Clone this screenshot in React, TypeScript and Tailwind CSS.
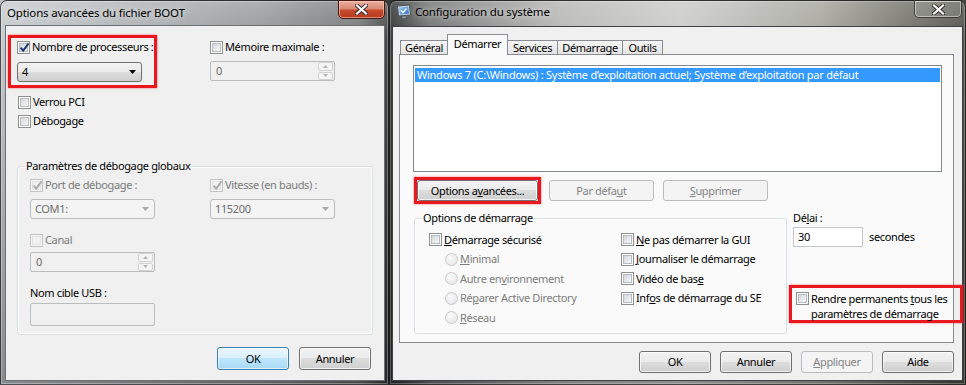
import type { ReactNode } from "react";

function Check({ checked = false, disabled = false }: { checked?: boolean; disabled?: boolean }) {
  return (
    <span
      className={`relative flex h-[13px] w-[13px] shrink-0 items-center justify-center border ${
        disabled ? "border-[#c4c4c4] bg-[#f7f7f7]" : "border-[#8e8f8f] bg-white"
      }`}
    >
      <span
        className={`h-[9px] w-[9px] border ${
          disabled
            ? "border-[#e2e2e2] bg-[#f2f2f2]"
            : "border-[#b8bcc2] bg-[linear-gradient(135deg,#d3d7dc,#f7f7f7)]"
        }`}
      />
      {checked && (
        <svg className="absolute left-[1px] top-0" width="11" height="11" viewBox="0 0 11 11">
          <path
            d="M1.6 5.6 L4.2 8.6 L9.6 1.4"
            fill="none"
            stroke={disabled ? "#ababab" : "#1f3574"}
            strokeWidth="2"
          />
        </svg>
      )}
    </span>
  );
}

function CheckRow({
  children,
  checked,
  disabled,
  className = "",
}: {
  children: ReactNode;
  checked?: boolean;
  disabled?: boolean;
  className?: string;
}) {
  return (
    <div className={`flex h-[16px] items-center gap-[2px] ${className}`}>
      <Check checked={checked} disabled={disabled} />
      <span className={disabled ? "text-[#7a7a7a]" : ""}>{children}</span>
    </div>
  );
}

function RadioRow({ children }: { children: ReactNode }) {
  return (
    <div className="flex h-[19.5px] items-center gap-[2px] pl-[16px]">
      <span className="h-[13px] w-[13px] shrink-0 rounded-full border border-[#c7c9cc] bg-[radial-gradient(circle_at_40%_35%,#fbfbfb,#e2e3e5)]" />
      <span className="text-[#7d7d7d]">{children}</span>
    </div>
  );
}

function Arrow({ color }: { color: string }) {
  return (
    <svg width="7" height="4" viewBox="0 0 7 4">
      <path d="M0 0H7L3.5 4Z" fill={color} />
    </svg>
  );
}

function Combo({ value, disabled = false }: { value: string; disabled?: boolean }) {
  return (
    <div
      className={`flex h-[20px] w-[125px] items-center justify-between rounded-[3px] border pl-[4px] pr-[5px] ${
        disabled
          ? "border-[#b9bdc0] bg-[#f4f4f4] text-[#6d6d6d]"
          : "border-[#707070] bg-[linear-gradient(#f2f2f2_0%,#ebebeb_50%,#dddddd_50%,#cfcfcf_100%)]"
      }`}
    >
      <span>{value}</span>
      <Arrow color={disabled ? "#a8a8a8" : "#000"} />
    </div>
  );
}

function Spin() {
  return (
    <div className="flex h-[20px] w-[125px] items-center justify-between rounded-[2px] border border-[#b9bdc0] bg-[#f0f0f0] pl-[5px] pr-px text-[#6d6d6d]">
      <span>0</span>
      <div className="flex h-[18px] w-[15px] flex-col gap-px">
        <div className="flex flex-1 items-center justify-center rounded-[2px] border border-[#d3d3d3] bg-[#f4f4f4]">
          <svg width="5" height="3" viewBox="0 0 5 3">
            <path d="M0 3H5L2.5 0Z" fill="#b3b3b3" />
          </svg>
        </div>
        <div className="flex flex-1 items-center justify-center rounded-[2px] border border-[#d3d3d3] bg-[#f4f4f4]">
          <svg width="5" height="3" viewBox="0 0 5 3">
            <path d="M0 0H5L2.5 3Z" fill="#b3b3b3" />
          </svg>
        </div>
      </div>
    </div>
  );
}

function Button({
  children,
  w = "w-[72px]",
  h = "h-[23px]",
  variant = "normal",
}: {
  children: ReactNode;
  w?: string;
  h?: string;
  variant?: "normal" | "default" | "disabled";
}) {
  const look =
    variant === "default"
      ? "border-[#3c7fb1] bg-[linear-gradient(#eaf6fd_0%,#d9f0fc_50%,#bee6fd_50%,#a7d9f5_100%)] shadow-[inset_0_0_0_1px_rgba(255,255,255,0.6)]"
      : variant === "disabled"
        ? "border-[#b9bdc0] bg-[#f4f4f4] text-[#838383]"
        : "border-[#707070] bg-[linear-gradient(#f2f2f2_0%,#ebebeb_50%,#dddddd_50%,#cfcfcf_100%)] shadow-[inset_0_0_0_1px_rgba(255,255,255,0.7)]";
  return (
    <div className={`flex shrink-0 items-center justify-center rounded-[3px] border ${w} ${h} ${look}`}>
      {children}
    </div>
  );
}

function CloseGlyph() {
  return (
    <svg width="13" height="11" viewBox="0 0 13 11">
      <path d="M2 1.5 L11 9.5 M11 1.5 L2 9.5" stroke="#3a2a28" strokeWidth="4" strokeLinecap="square" />
      <path d="M2 1.5 L11 9.5 M11 1.5 L2 9.5" stroke="#ffffff" strokeWidth="2.2" strokeLinecap="square" />
    </svg>
  );
}

function MonitorIcon() {
  return (
    <svg width="16" height="16" viewBox="0 0 16 16">
      <defs>
        <linearGradient id="scr" x1="0" y1="0" x2="1" y2="1">
          <stop offset="0" stopColor="#9fd0f5" />
          <stop offset="1" stopColor="#2f6fc0" />
        </linearGradient>
      </defs>
      <path d="M1.5 2 L13.5 1 L14.5 11 L2.5 12 Z" fill="#d6d9dd" stroke="#4a5058" />
      <path d="M3 3.3 L12.3 2.5 L13 9.8 L3.8 10.6 Z" fill="url(#scr)" />
      <path d="M5 6.5 L7 8.5 L10.5 4.5" fill="none" stroke="#ffffff" strokeWidth="1.2" />
      <path d="M6 12 L10 11.7 L11 14.5 L5.5 14.8 Z" fill="#8c939b" stroke="#4a5058" strokeWidth="0.8" />
    </svg>
  );
}

function BootWindow() {
  return (
    <div className="flex h-[385px] w-[389px] shrink-0 flex-col rounded-t-[7px] border border-[rgba(20,22,24,0.7)] bg-[linear-gradient(180deg,rgba(255,255,255,0.28),rgba(255,255,255,0.06)_40px,rgba(0,0,0,0.3))] pl-[4px] pr-[3px] shadow-[inset_0_0_0_1px_rgba(255,255,255,0.3)]">
      {/* Title bar */}
      <div className="flex h-[24px] items-start justify-between">
        <span className="mt-[4px] pl-[2px] text-[11.5px] tracking-[-0.2px] [text-shadow:0_0_6px_rgba(255,255,255,0.9)]">
          Options avancées du fichier BOOT
        </span>
        <div className="-mt-px flex h-[19px] w-[47px] items-center justify-center rounded-b-[5px] border border-[#4a1a12] bg-[linear-gradient(#eab0a2_0%,#d98a73_45%,#c54a2e_55%,#b8391c_100%)] shadow-[inset_0_0_0_1px_rgba(255,210,200,0.55)]">
          <CloseGlyph />
        </div>
      </div>

      {/* Client */}
      <div className="h-[356px] border border-[#6a7176] bg-[#f0f0f0]">
        <div className="flex items-start">
          <div className="ml-[2px] mt-[9px] w-[149px] border-[3px] border-[#e8181e] pb-[3px] pl-[6px] pt-px shadow-[0_0_2px_rgba(232,24,30,0.6)]">
            <CheckRow checked>Nombre de processeurs :</CheckRow>
            <div className="mt-[7px]">
              <Combo value="4" />
            </div>
          </div>
          <div className="ml-[53px] mt-[13px]">
            <CheckRow>Mémoire maximale :</CheckRow>
            <div className="mt-[6px]">
              <Spin />
            </div>
          </div>
        </div>

        <CheckRow className="ml-[12px] mt-[6px]">Verrou PCI</CheckRow>
        <CheckRow className="ml-[12px] mt-[3px]">Débogage</CheckRow>

        <fieldset className="ml-[11px] mt-[29px] h-[177px] w-[356px] rounded-[3px] border border-[#d5dfe5] shadow-[inset_0_0_0_1px_#ffffff]">
          <legend className="ml-[7px] px-px">Paramètres de débogage globaux</legend>
          <div className="pl-[12px] pt-[3px]">
            <div className="flex">
              <div className="w-[180px]">
                <CheckRow checked disabled>
                  Port de débogage :
                </CheckRow>
                <div className="mt-[6px]">
                  <Combo value="COM1:" disabled />
                </div>
              </div>
              <div>
                <CheckRow checked disabled>
                  Vitesse (en bauds) :
                </CheckRow>
                <div className="mt-[6px]">
                  <Combo value="115200" disabled />
                </div>
              </div>
            </div>
            <CheckRow disabled className="mt-[13px]">
              Canal
            </CheckRow>
            <div className="mt-[4px]">
              <Spin />
            </div>
            <div className="mt-[13px] h-[16px]">Nom cible USB :</div>
            <div className="mt-[2px] h-[23px] w-[125px] rounded-[2px] border border-[#b9bdc0] bg-[#f0f0f0]" />
          </div>
        </fieldset>

        <div className="ml-[11px] mt-[12px] flex w-[356px] justify-end gap-[10px] pr-[2px]">
          <Button variant="default">OK</Button>
          <Button>Annuler</Button>
        </div>
      </div>
    </div>
  );
}

function Tab({ children, selected = false, w, first = false }: { children: ReactNode; selected?: boolean; w: string; first?: boolean }) {
  return (
    <div
      className={`flex shrink-0 items-center justify-center border border-b-0 border-[#898c95] ${w} ${first ? "ml-px" : "-ml-px"} ${
        selected
          ? "relative z-10 -mb-px h-[21px] bg-[#fafafa] pb-[3px]"
          : "h-[14px] bg-[linear-gradient(#f6f6f6,#e3e3e3)] leading-[13px]"
      }`}
    >
      {children}
    </div>
  );
}

function MsconfigWindow() {
  return (
    <div className="flex h-[385px] w-[577px] shrink-0 flex-col rounded-t-[7px] border border-[rgba(20,22,18,0.75)] bg-[linear-gradient(180deg,rgba(255,255,255,0.2),rgba(255,255,255,0.04)_40px,rgba(0,0,0,0.3))] px-[2px] shadow-[inset_0_0_0_1px_rgba(255,255,255,0.25)]">
      {/* Title bar */}
      <div className="flex h-[25px] items-start justify-between">
        <div className="mt-[3px] flex items-center gap-[3px] pl-[4px]">
          <MonitorIcon />
          <span className="text-[11.5px] tracking-[-0.2px] [text-shadow:0_0_6px_rgba(255,255,255,0.9)]">
            Configuration du système
          </span>
        </div>
        <div className="-mt-px mr-px flex h-[18px] w-[48px] items-center justify-center rounded-b-[5px] border border-[rgba(30,30,30,0.7)] bg-[rgba(255,255,255,0.12)] shadow-[inset_0_0_0_1px_rgba(255,255,255,0.45)]">
          <CloseGlyph />
        </div>
      </div>

      {/* Client */}
      <div className="h-[355px] border border-[#3e4246] bg-[#f0f0f0]">
        <div className="ml-[6px] mt-[7px] flex h-[20px] items-end">
          <Tab w="w-[48px]" first>
            Général
          </Tab>
          <Tab w="w-[61px]" selected>
            Démarrer
          </Tab>
          <Tab w="w-[51px]">Services</Tab>
          <Tab w="w-[66px]">Démarrage</Tab>
          <Tab w="w-[41px]">Outils</Tab>
        </div>

        <div className="ml-[6px] h-[289px] w-[555px] border border-[#898c95] bg-[#fafafa]">
          <div className="ml-[13px] mt-[10px] h-[107px] w-[529px] border border-[#828790] bg-white">
            <div className="ml-px mr-px mt-[2px] h-[14px] bg-[#3399ff] pl-[2px] leading-[14px] tracking-[-0.25px] text-white">
              Windows 7 (C:\Windows) : Système d’exploitation actuel; Système d’exploitation par défaut
            </div>
          </div>

          <div className="ml-[14px] mt-[5px] flex items-center">
            <div className="border-[3px] border-[#e8181e] shadow-[0_0_2px_rgba(232,24,30,0.6)]">
              <Button w="w-[121px]" h="h-[21px]">
                <span>
                  Options a<u>v</u>ancées...
                </span>
              </Button>
            </div>
            <div className="ml-[8px]">
              <Button w="w-[105px]" h="h-[21px]" variant="disabled">
                <span>
                  Par défa<u>u</u>t
                </span>
              </Button>
            </div>
            <div className="ml-[9px]">
              <Button w="w-[105px]" h="h-[21px]" variant="disabled">
                <span>
                  <u>S</u>upprimer
                </span>
              </Button>
            </div>
          </div>

          <div className="mt-[6px] flex items-start">
            <fieldset className="ml-[14px] h-[124px] w-[373px] shrink-0 rounded-[3px] border border-[#d5dfe5] shadow-[inset_0_0_0_1px_#ffffff]">
              <legend className="ml-[7px] px-px">Options de démarrage</legend>
              <div className="flex pl-[14px] pt-[4px]">
                <div className="w-[192px]">
                  <div className="flex h-[19.5px] items-center gap-[2px]">
                    <Check />
                    <span>
                      <u>D</u>émarrage sécurisé
                    </span>
                  </div>
                  <RadioRow>
                    <u>M</u>inimal
                  </RadioRow>
                  <RadioRow>
                    Autre en<u>v</u>ironnement
                  </RadioRow>
                  <RadioRow>
                    Ré<u>p</u>arer Active Directory
                  </RadioRow>
                  <RadioRow>
                    <u>R</u>éseau
                  </RadioRow>
                </div>
                <div>
                  {[
                    <>
                      <u>N</u>e pas démarrer la GUI
                    </>,
                    <>
                      <u>J</u>ournaliser le démarrage
                    </>,
                    <>
                      Vidéo de bas<u>e</u>
                    </>,
                    <>
                      Inf<u>o</u>s de démarrage du SE
                    </>,
                  ].map((label, i) => (
                    <div key={i} className="flex h-[19.5px] items-center gap-[2px]">
                      <Check />
                      <span>{label}</span>
                    </div>
                  ))}
                </div>
              </div>
            </fieldset>

            <div className="ml-[2px] w-[174px] shrink-0">
              <div className="pl-[4px]">
                Dé<u>l</u>ai :
              </div>
              <div className="mt-px flex items-center pl-[4px]">
                <div className="h-[20px] w-[70px] border border-[#c3c7cc] bg-white pl-[4px] leading-[18px]">30</div>
                <span className="ml-[6px]">secondes</span>
              </div>
              <div className="mt-[38px] flex h-[38px] items-start gap-[2px] border-[3px] border-[#e8181e] pl-[4px] pt-[3px] leading-[15px] shadow-[0_0_2px_rgba(232,24,30,0.6)]">
                <div className="mt-px">
                  <Check />
                </div>
                <span>
                  Rendre permanents <u>t</u>ous les
                  <br />
                  paramètres de démarrage
                </span>
              </div>
            </div>
          </div>
        </div>

        <div className="ml-[6px] mt-[8px] flex w-[555px] justify-end gap-[9px]">
          <Button h="h-[22px]">OK</Button>
          <Button h="h-[22px]">Annuler</Button>
          <Button h="h-[22px]" variant="disabled">
            <span>
              <u>A</u>ppliquer
            </span>
          </Button>
          <Button h="h-[22px]">Aide</Button>
        </div>
      </div>
    </div>
  );
}

export default function App() {
  return (
    <div className="flex h-[385px] w-[966px] overflow-hidden whitespace-nowrap bg-[linear-gradient(90deg,#c3c7ca_0px,#a7abae_140px,#8f9293_260px,#6c6e6f_360px,#2f3131_392px,#6f7171_430px,#b6b6b4_560px,#cbcbc9_680px,#a5a59d_820px,#4d4d45_966px)] font-['Noto_Sans',sans-serif] text-[11px] leading-[16px] tracking-[-0.36px] text-black">
      <BootWindow />
      <MsconfigWindow />
    </div>
  );
}
